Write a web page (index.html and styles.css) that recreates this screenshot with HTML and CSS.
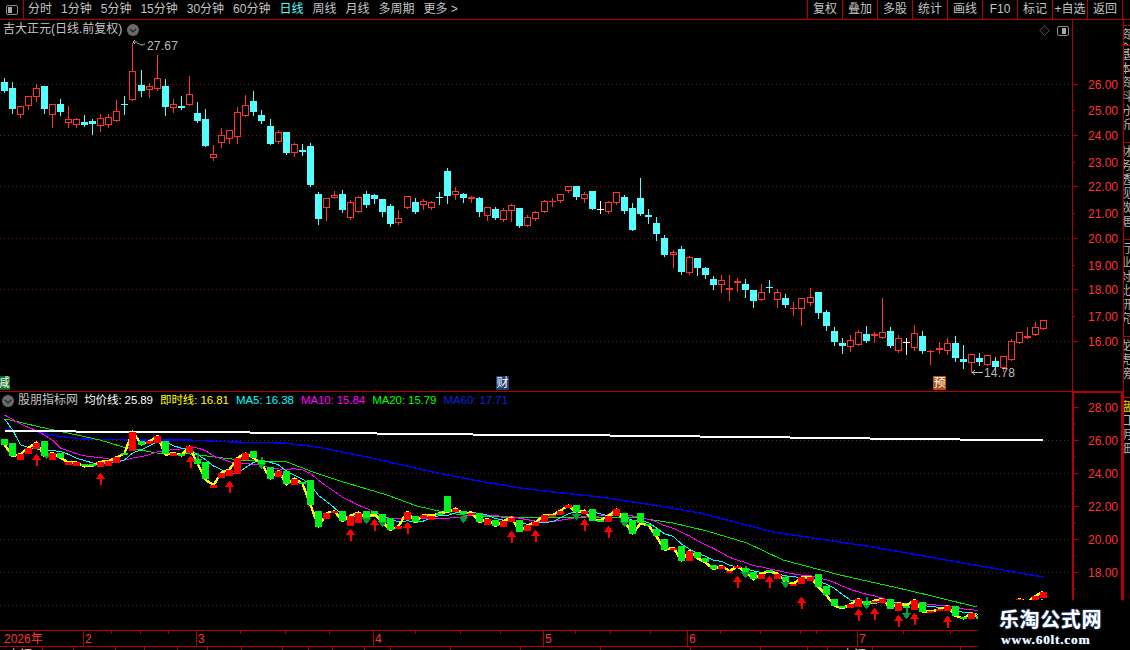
FILE: index.html
```html
<!DOCTYPE html>
<html lang="zh-CN">
<head>
<meta charset="utf-8">
<title>吉大正元 K线</title>
<link rel="stylesheet" href="styles.css">
</head>
<body>
<div class="app">
  <header class="toolbar">
    <button class="panel-btn" aria-label="面板">
      <svg class="panel-icon" viewBox="0 0 12 10"><rect x="0.5" y="0.5" width="11" height="9" rx="1.5"/><rect class="panel-fill" x="2" y="2" width="4" height="6"/></svg>
    </button>
    <nav class="periods">
      <span>分时</span><span>1分钟</span><span>5分钟</span><span>15分钟</span><span>30分钟</span><span>60分钟</span>
      <span class="active">日线</span><span>周线</span><span>月线</span><span>多周期</span><span>更多&nbsp;&gt;</span>
    </nav>
    <nav class="tools">
      <span>复权</span><span>叠加</span><span>多股</span><span>统计</span><span>画线</span><span>F10</span><span>标记</span><span>+自选</span><span>返回</span>
    </nav>
  </header>

  <div class="workspace">
    <main class="panes">
      <section class="pane pane-price">
        <div class="plot">
          <svg id="price" class="chart" viewBox="0 20 1072 371" width="1072" height="371"></svg>
          <div class="title">
            <span>吉大正元(日线.前复权)</span>
            <svg class="drop" viewBox="0 0 12 12"><circle cx="6" cy="6" r="6"/><path d="M3 5l3 3 3-3"/></svg>
          </div>
          <div class="corner-icons">
            <svg class="diamond" viewBox="0 0 12 12"><path d="M6 .7L11.3 6 6 11.3.7 6z"/></svg>
            <svg class="panel-icon" viewBox="0 0 12 10"><rect x="0.5" y="0.5" width="11" height="9" rx="1.5"/><rect class="panel-fill" x="5" y="2" width="4" height="6"/></svg>
          </div>
          <span class="flag flag-jian">减</span>
          <span class="flag flag-cai">财</span>
          <span class="flag flag-yu">预</span>
        </div>
        <svg id="priceAxis" class="axis" viewBox="1073 20 50 371" width="50" height="371"></svg>
      </section>

      <section class="pane pane-ind">
        <div class="plot">
          <svg id="ind" class="chart" viewBox="0 392 1072 238" width="1072" height="238"></svg>
          <div class="legend">
            <svg class="drop" viewBox="0 0 12 12"><circle cx="6" cy="6" r="6"/><path d="M3 5l3 3 3-3"/></svg>
            <span class="lg-name">股朋指标网</span>
            <span class="lg-white">均价线: 25.89</span>
            <span class="lg-yellow">即时线: 16.81</span>
            <span class="lg-cyan">MA5: 16.38</span>
            <span class="lg-magenta">MA10: 15.84</span>
            <span class="lg-green">MA20: 15.79</span>
            <span class="lg-blue">MA60: 17.71</span>
          </div>
        </div>
        <svg id="indAxis" class="axis axis-active" viewBox="1074 392 47 238" width="47" height="238"></svg>
      </section>

      <svg id="time" class="time" viewBox="0 631 1123 15" width="1123" height="16"></svg>
      <svg id="status" class="status" viewBox="0 647 1123 3" width="1123" height="4"></svg>
    </main>

    <aside class="side">
      <div class="tab tab-1">资金</div>
      <div class="tab tab-2">基本资料分析</div>
      <div class="tab tab-3">财务透视数据</div>
      <div class="tab tab-4">行业对比研究</div>
      <div class="tab tab-5">龙虎榜</div>
      <div class="tab tab-6"><span class="tab-mark">盘</span>口明细</div>
    </aside>
  </div>

  <div class="watermark">
    <span class="wm-cn">乐淘公式网</span>
    <span class="wm-url">www.60lt.com</span>
  </div>
</div>
<script src="chart.js"></script>
</body>
</html>
```

FILE: styles.css
```css
* { box-sizing: border-box; }
html, body { margin: 0; padding: 0; background: #000; }
body { font-family: "Liberation Sans", "Noto Sans CJK SC", sans-serif; font-size: 12px; color: #c4c4c4; }
svg { display: block; }

.app { position: relative; width: 1130px; height: 650px; overflow: hidden; display: flex; flex-direction: column; background: #000; }

/* toolbar */
.toolbar { flex: 0 0 20px; display: flex; align-items: stretch; border-bottom: 1px solid #b30000; line-height: 19px; white-space: nowrap; }
.panel-btn { flex: 0 0 24px; padding: 0; background: none; border: 0; border-right: 1px solid #b30000; display: flex; align-items: center; justify-content: center; }
.panel-icon { width: 12px; height: 10px; fill: none; stroke: #8a8a8a; }
.panel-fill { fill: #a8a8a8; stroke: none; }
.periods { display: flex; gap: 9px; padding-left: 4px; flex: 1; }
.periods .active { color: #54ffff; }
.tools { display: flex; margin-right: 7px; }
.tools span { width: 35px; text-align: center; border-left: 1px solid #b30000; }
.tools span:last-child { width: 36px; border-right: 1px solid #b30000; }

/* layout */
.workspace { flex: 1; display: flex; min-height: 0; }
.panes { width: 1123px; display: flex; flex-direction: column; }
.pane { display: flex; }
.pane-price { height: 372px; border-bottom: 1px solid #b30000; }
.pane-ind { height: 238px; }
.plot { position: relative; width: 1072px; flex: 0 0 1072px; }
.axis { border-left: 1px solid #b30000; width: 51px; flex: 0 0 51px; }
.axis-active { border-left: 2px solid #b30000; border-right: 2px solid #b30000; }
.chart { overflow: hidden; }
.time { border-top: 1px solid #b30000; flex: 0 0 16px; }
.status { border-top: 1px solid #b30000; flex: 0 0 4px; }

/* overlays in the plot */
.title { position: absolute; left: 3px; top: 2px; display: flex; align-items: center; gap: 5px; font-size: 12px; line-height: 15px; }
.drop { width: 12px; height: 12px; }
.drop circle { fill: #6a6a6a; }
.drop path { fill: none; stroke: #222; stroke-width: 1.2; }
.corner-icons { position: absolute; left: 1039px; top: 5px; display: flex; align-items: center; gap: 7px; }
.diamond { width: 11px; height: 11px; fill: none; stroke: #5c5c5c; }
.legend { position: absolute; left: 2px; top: 1px; display: flex; align-items: center; gap: 7.2px; line-height: 15px; white-space: nowrap; font-size: 11.5px; letter-spacing: -.1px; }
.lg-name { margin-left: -3.2px; margin-right: -1px; color: #c4c4c4; font-size: 12px; letter-spacing: 0; }
.lg-white { color: #fff; }
.lg-yellow { color: #ffff00; }
.lg-cyan { color: #00ffff; }
.lg-magenta { color: #ff00ff; }
.lg-green { color: #00ff00; }
.lg-blue { color: #0c24d8; }

.flag { position: absolute; top: 356px; height: 14px; width: 13px; font-size: 12px; line-height: 14px; text-align: center; color: #fff; }
.flag-jian { left: -3px; background: #0a6e1e; }
.flag-cai { left: 496px; background: #1f3d6e; }
.flag-yu { left: 933px; background: #b0500f; }

/* svg texts */
.ax-label { font-size: 12px; fill: #ff3232; font-family: "Liberation Sans", sans-serif; }
.time-label { font-size: 12px; fill: #ff3232; font-family: "Liberation Sans", "Noto Sans CJK SC", sans-serif; }
.note { font-size: 12px; fill: #bcbcbc; font-family: "Liberation Sans", sans-serif; letter-spacing: .2px; }
.status-label { font-size: 12px; fill: #d8d8d8; font-family: "Noto Sans CJK SC", sans-serif; }

/* right strip */
.side { width: 7px; border-left: 1px solid #b30000; padding-top: 5px; display: flex; flex-direction: column; overflow: hidden; }
.tab { border-top: 1px solid #b30000; overflow: hidden; writing-mode: vertical-rl; line-height: 12px; font-size: 12px; letter-spacing: 2px; color: #b4b4b4; white-space: nowrap; padding-top: 2px; }
.tab-1 { height: 20px; }
.tab-2, .tab-3, .tab-4 { height: 97px; }
.tab-5 { height: 61px; }
.tab-6 { flex: 1; }
.tab-mark { color: #e8d800; }

/* watermark */
.watermark { position: absolute; left: 978px; top: 600px; width: 152px; height: 50px; background: #000; display: flex; flex-direction: column; align-items: flex-start; padding-left: 21px; }
.wm-cn { font-family: "Noto Sans CJK SC", sans-serif; font-weight: 700; font-size: 20px; line-height: 26px; letter-spacing: .6px; margin-top: 6px; color: #fff; text-shadow: 0 0 2px #6aa0ff; }
.wm-url { font-family: "Liberation Serif", serif; font-weight: 700; font-size: 13.5px; line-height: 14px; letter-spacing: .7px; margin-top: 1px; margin-left: 2px; color: #fff; text-shadow: 0 0 1px #6aa0ff; }
```

FILE: chart.js
```js
// Candles as read off the chart: [x, kind, body top, body bottom, high, low] in three blocks.
const blocks = [
  { ox: 0, oy: 70, rows: [
    [13,'c',36,62,24,66],[37,'c',54,117,36,128],[61,'r',109,134,109,140],[85,'r',79,107,79,117],[109,'r',55,80,42,93],
    [133,'c',48,117,48,128],[157,'r',103,134,103,170],[181,'c',102,126,87,134],[205,'r',148,158,108,171],[229,'r',148,164,145,171],
    [253,'c',156,165,135,168],[277,'c',153,162,147,192],[301,'r',145,167,132,182],[325,'r',142,164,132,171],[349,'r',124,152,90,152],
    [373,'c',102,104,78,132],[397,'r',4,89,-81,89],[424,'c',45,63,0,78],[448,'r',49,60,40,81],[472,'r',25,56,-45,60],
    [496,'c',48,111,27,135],[520,'r',103,113,87,126],[544,'c',108,114,78,117],[568,'r',73,104,18,104],[592,'c',129,153,96,156],
    [616,'c',147,228,117,228],[640,'r',253,263,225,270],[664,'r',196,219,174,231],[688,'r',181,206,181,219],[712,'r',127,200,111,219],
    [736,'r',106,137,75,137],[760,'c',93,126,63,135],[784,'c',135,153,120,159],[811,'c',168,222,147,222],[835,'r',187,216,180,219],
    [859,'c',186,249,186,252],[883,'r',223,248,219,258],[907,'c',240,246,222,255],[931,'c',228,345,219,348],[955,'c',372,447,366,462],
    [979,'r',385,414,385,450]
  ]},
  { ox: 330, oy: 160, rows: [
    [13,'r',106,113,93,113],[37,'c',102,150,90,156],[61,'r',127,174,120,177],[85,'r',112,155,109,155],[109,'c',102,135,93,141],
    [133,'c',105,117,102,129],[157,'c',117,156,117,168],[181,'c',138,192,132,198],[205,'r',175,188,150,192],[232,'r',109,143,109,143],
    [256,'c',126,156,114,159],[280,'r',124,134,117,147],[304,'r',127,143,124,147],[328,'c',112,114,96,132],[352,'c',33,108,24,129],
    [376,'r',94,104,81,117],[400,'c',102,114,99,126],[424,'f',111,116,108,126],[448,'c',114,156,111,168],[472,'r',142,167,142,180],
    [496,'c',148,174,141,177],[520,'r',151,180,144,183],[544,'r',136,152,132,183],[568,'c',144,198,144,201],[592,'r',172,198,165,198],
    [616,'r',157,177,153,180],[643,'r',124,155,120,155],[667,'f',124,126,114,138],[691,'r',103,122,103,125],[715,'r',79,93,79,96],
    [739,'c',78,111,78,117],[763,'r',103,117,96,126],[787,'c',93,147,93,147],[811,'w',148,150,123,159],[835,'r',127,156,124,159],
    [859,'r',97,128,97,131],[883,'c',111,153,105,159],[907,'c',144,210,129,210],[931,'c',114,162,54,165],[955,'c',166,170,147,189],
    [979,'c',189,222,171,240]
  ]},
  { ox: 650, oy: 220, rows: [
    [43,'c',54,105,45,108],[70,'r',96,104,90,141],[94,'c',87,156,78,162],[118,'r',112,159,108,162],[142,'c',114,144,114,165],
    [166,'c',144,165,141,174],[190,'c',177,195,168,207],[214,'r',181,194,165,216],[238,'f',205,209,165,240],[262,'f',184,188,174,213],
    [286,'c',192,210,177,231],[310,'c',210,243,210,261],[334,'r',217,240,192,240],[358,'c',201,203,180,216],[382,'r',217,239,207,261],
    [406,'c',234,255,222,261],[430,'f',264,267,246,285],[454,'r',235,266,235,315],[481,'r',232,248,204,255],[505,'c',216,279,216,294],
    [529,'c',276,318,270,330],[553,'c',333,366,321,375],[577,'c',369,378,354,399],[601,'r',361,380,345,393],[625,'r',337,374,330,374],
    [649,'c',342,363,318,366],[673,'f',343,349,336,366],[697,'r',337,353,234,353],[721,'c',333,378,321,381],[745,'r',355,392,345,396],
    [769,'w',366,368,354,402],[793,'r',340,383,315,390],[817,'c',348,393,333,399],[841,'f',393,395,390,432],[868,'f',385,389,366,399],
    [892,'r',370,394,354,402],[916,'c',369,414,348,423],[940,'c',417,426,375,444],[964,'r',403,428,403,456],[988,'c',414,426,399,435],
    [1012,'r',406,434,406,434],[1036,'c',423,441,411,447],[1060,'r',409,444,409,453],[1084,'r',364,419,358,419],[1108,'r',337,368,337,368],
    [1132,'f',349,353,321,353],[1156,'r',322,344,306,344],[1180,'r',301,328,301,328]
  ]}
];

const candles = blocks.flatMap(b => b.rows.map(([x, kind, bt, bb, hi, lo]) => ({
  x: Math.floor(b.ox + x / 3) + 0.5,
  kind,
  top: Math.round(b.oy + bt / 3),
  bottom: Math.round(b.oy + bb / 3),
  high: Math.round(b.oy + hi / 3),
  low: Math.round(b.oy + lo / 3)
})));

const NS = 'http://www.w3.org/2000/svg';
function el(parent, name, attrs, text) {
  const n = document.createElementNS(NS, name);
  for (const k in attrs) n.setAttribute(k, attrs[k]);
  if (text !== undefined) n.textContent = text;
  parent.appendChild(n);
  return n;
}
function poly(parent, pts, stroke, width, extra) {
  el(parent, 'polyline', Object.assign({
    points: pts.map(p => p.join(',')).join(' '),
    fill: 'none', stroke, 'stroke-width': width, 'shape-rendering': 'crispEdges'
  }, extra || {}));
}

const RED = '#ff3232', CYAN = '#54ffff', GRID = '#701818', TICK = '#b30000';

/* ---- price pane ---- */
const price = document.getElementById('price');
[84, 135, 186, 238, 289, 341].forEach(y => el(price, 'line', { x1: 0, x2: 1072, y1: y + 0.5, y2: y + 0.5, stroke: GRID, 'stroke-dasharray': '1 3' }));
candles.forEach(c => {
  const color = c.kind === 'c' ? CYAN : c.kind === 'w' ? '#fff' : RED;
  const crisp = { 'shape-rendering': 'crispEdges' };
  el(price, 'line', Object.assign({ x1: c.x, x2: c.x, y1: c.high, y2: c.low + 1, stroke: color }, crisp));
  const h = Math.max(1, c.bottom - c.top);
  if (c.kind === 'r') {
    el(price, 'rect', Object.assign({ x: c.x - 3, y: c.top + 0.5, width: 6, height: Math.max(1, h - 1), fill: '#000', stroke: color }, crisp));
  } else {
    el(price, 'rect', Object.assign({ x: c.x - 3.5, y: c.top, width: 7, height: h, fill: color }, crisp));
  }
});
// highest and lowest price notes
el(price, 'path', { d: 'M137 42h-4l2-2M133 42l2 2M137 43c2 0 3 2 5 2s2-1 3-1', fill: 'none', stroke: '#bcbcbc' });
el(price, 'text', { x: 147, y: 50, class: 'note' }, '27.67');
el(price, 'path', { d: 'M983 372.5h-11l3-2.5M972 372.5l3 2.5', fill: 'none', stroke: '#bcbcbc' });
el(price, 'text', { x: 984, y: 377, class: 'note' }, '14.78');

const priceAxis = document.getElementById('priceAxis');
[[26,84],[25,110],[24,135],[23,162],[22,186],[21,213],[20,238],[19,265],[18,289],[17,316],[16,341]].forEach(([v, y]) => {
  const major = v % 2 === 0;
  el(priceAxis, 'line', { x1: 1073, x2: major ? 1078 : 1075, y1: y + 0.5, y2: y + 0.5, stroke: TICK });
  el(priceAxis, 'text', { x: 1088, y: y + 4.5, class: 'ax-label' }, v.toFixed(2));
});

/* ---- indicator pane ---- */
const ind = document.getElementById('ind');
const toInd = y => 440 + (y - 84) * 0.642;
[440, 473, 506, 539, 572, 605].forEach(y => el(ind, 'line', { x1: 0, x2: 1072, y1: y + 0.5, y2: y + 0.5, stroke: GRID, 'stroke-dasharray': '1 3' }));

const closes = candles.map(c => toInd(c.kind === 'c' ? c.bottom : c.top));
const xs = candles.map(c => c.x);
// closes before the first visible day, so the short averages start where they do on screen
const seed = [411, 411, 411, 411, 411, 402, 378, 435, 435];
function movingAverage(n) {
  const all = seed.concat(closes);
  return closes.map((_, i) => {
    const end = i + seed.length + 1;
    const win = all.slice(Math.max(0, end - n), end);
    return [xs[i], win.reduce((a, b) => a + b, 0) / win.length];
  });
}

// long averages, read off the chart
poly(ind, [[5,430],[33,431],[57,436],[83,439],[133,440],[187,440],[233,442],[283,443],[317,447],[367,457],[433,472],[473,480],[520,488],[553,492],[600,497],[640,503],[660,506],[700,513],[773,532],[873,547],[980,566],[1043,577]], '#0000ff', 1.4);
poly(ind, [[5,419],[10,420],[40,427],[77,435],[100,440],[123,447],[157,453],[190,454],[240,460],[287,462],[313,472],[340,481],[387,495],[417,506],[443,512],[463,515],[520,518],[587,517],[640,518],[673,523],[707,531],[747,543],[783,560],[840,575],[907,590],[977,607]], '#00e800', 1);
poly(ind, movingAverage(10), '#ff00ff', 1);
poly(ind, movingAverage(5), '#00ffff', 1);

// average-price line, stepped
const steps = [[5,430],[76,431],[250,432],[377,433],[473,434],[610,435],[700,436],[790,437],[870,438],[960,439],[1043,440]];
steps.forEach(([x, y], i) => {
  if (i < steps.length - 1) el(ind, 'rect', { x, y, width: steps[i + 1][0] - x, height: 2, fill: '#fff', 'shape-rendering': 'crispEdges' });
});

// instant line
poly(ind, closes.map((y, i) => [xs[i], y]), '#ffff00', 2.4, { 'stroke-linejoin': 'round' });

// down markers go under the candles
[[46.7,447],[197.7,453],[261.7,457],[366.7,512],[382.3,515],[463.7,511],[576,508],[624.3,515],[745.7,566],[785.7,576],[866.7,597],[906.7,607]].forEach(([x, y]) => {
  const cx = Math.floor(x) + 0.5;
  el(ind, 'path', { d: `M${cx - 1} ${y}h2v6h4l-5 6-5-6h4z`, fill: '#00a030', 'shape-rendering': 'crispEdges' });
});

candles.forEach(c => {
  const t = toInd(c.top), b = toInd(c.bottom);
  const fill = c.kind === 'c' ? '#00f020' : c.kind === 'w' ? '#00f020' : '#ff0000';
  el(ind, 'rect', { x: c.x - 3.5, y: Math.round(t), width: 7, height: Math.max(2, Math.round(b - t)), fill, 'shape-rendering': 'crispEdges' });
});

// buy markers
[[36.7,454],[100.7,473],[190,456],[229.7,481],[350.7,529],[374.7,519],[407.7,522],[511.7,531],[535.7,530],[584.7,519],[608.7,526],[737.7,576],[769.7,576],[801.7,597],[858.7,609],[874.7,608],[898.7,615],[914.7,613],[947.7,616]].forEach(([x, y]) => {
  const cx = Math.floor(x) + 0.5;
  el(ind, 'path', { d: `M${cx} ${y}l5 6h-4v6h-2v-6h-4z`, fill: '#ff0000', 'shape-rendering': 'crispEdges' });
});

const indAxis = document.getElementById('indAxis');
[[28,407],[26,440],[24,473],[22,506],[20,539],[18,572]].forEach(([v, y]) => {
  el(indAxis, 'line', { x1: 1074, x2: 1079, y1: y + 0.5, y2: y + 0.5, stroke: TICK });
  el(indAxis, 'line', { x1: 1074, x2: 1076, y1: y + 17, y2: y + 17, stroke: TICK });
  el(indAxis, 'text', { x: 1088, y: y + 4.5, class: 'ax-label' }, v.toFixed(2));
});
el(indAxis, 'line', { x1: 1074, x2: 1123, y1: 392.5, y2: 392.5, stroke: TICK, 'stroke-width': 1 });

/* ---- time axis ---- */
const time = document.getElementById('time');
[[83,'2'],[196,'3'],[373,'4'],[543,'5'],[687,'6'],[857,'7']].forEach(([x, t]) => {
  el(time, 'line', { x1: x + 0.5, x2: x + 0.5, y1: 630, y2: 646, stroke: TICK });
  el(time, 'text', { x: x + 2, y: 643, class: 'time-label' }, t);
});
el(time, 'text', { x: 4, y: 643, class: 'time-label' }, '2026年');
[111,140,168,240,285,329,415,460,500,575,610,650,720,760,800,816,903,950].forEach(x => {
  el(time, 'line', { x1: x + 0.5, x2: x + 0.5, y1: 630, y2: 634, stroke: TICK });
});

/* ---- status row, cut off by the window edge ---- */
const status = document.getElementById('status');
[42,73,115,144,177,207,241,282,308,332,364,390,450,520,600,690,760,807,827,872,960].forEach(x => {
  el(status, 'line', { x1: x + 0.5, x2: x + 0.5, y1: 647, y2: 650, stroke: TICK });
});
el(status, 'text', { x: 8, y: 659, class: 'status-label' }, '上证');
el(status, 'text', { x: 842, y: 659, class: 'status-label' }, '上证');
```
